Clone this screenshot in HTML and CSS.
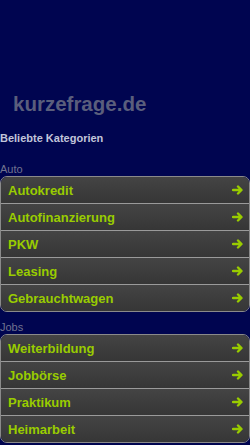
FILE: index.html
```html
<!DOCTYPE html>
<html>
<head>
    <title>kurzefrage.de</title>
    <link rel="stylesheet" href="styles.css">
</head>
<body>
    <div class="header">
        <h1 class="logo">kurzefrage.de</h1>
    </div>

    <h2 class="section-title">Beliebte Kategorien</h2>

    <!-- Auto -->
    <p class="group-label">Auto</p>
    <ul class="link-list">
        <li><a href="#">Autokredit<svg class="arrow" viewBox="0 0 12 10"><path d="M1 5h8M6 1.5L9.5 5 6 8.5"/></svg></a></li>
        <li><a href="#">Autofinanzierung<svg class="arrow" viewBox="0 0 12 10"><path d="M1 5h8M6 1.5L9.5 5 6 8.5"/></svg></a></li>
        <li><a href="#">PKW<svg class="arrow" viewBox="0 0 12 10"><path d="M1 5h8M6 1.5L9.5 5 6 8.5"/></svg></a></li>
        <li><a href="#">Leasing<svg class="arrow" viewBox="0 0 12 10"><path d="M1 5h8M6 1.5L9.5 5 6 8.5"/></svg></a></li>
        <li><a href="#">Gebrauchtwagen<svg class="arrow" viewBox="0 0 12 10"><path d="M1 5h8M6 1.5L9.5 5 6 8.5"/></svg></a></li>
    </ul>

    <!-- Jobs -->
    <p class="group-label">Jobs</p>
    <ul class="link-list">
        <li><a href="#">Weiterbildung<svg class="arrow" viewBox="0 0 12 10"><path d="M1 5h8M6 1.5L9.5 5 6 8.5"/></svg></a></li>
        <li><a href="#">Jobbörse<svg class="arrow" viewBox="0 0 12 10"><path d="M1 5h8M6 1.5L9.5 5 6 8.5"/></svg></a></li>
        <li><a href="#">Praktikum<svg class="arrow" viewBox="0 0 12 10"><path d="M1 5h8M6 1.5L9.5 5 6 8.5"/></svg></a></li>
        <li><a href="#">Heimarbeit<svg class="arrow" viewBox="0 0 12 10"><path d="M1 5h8M6 1.5L9.5 5 6 8.5"/></svg></a></li>
    </ul>
</body>
</html>
```
FILE: styles.css
```css
body {
    margin: 0;
    background-color: #000550;
    font-family: "Liberation Sans", Arial, sans-serif;
}

.header {
    padding: 92px 0 0 13px;
}

.logo {
    margin: 0;
    font-size: 20.5px;
    line-height: 24px;
    color: #5a5e7c;
}

.section-title {
    margin: 16px 0 18px 0;
    font-size: 11px;
    line-height: 13px;
    color: #c2c5da;
}

.group-label {
    margin: 9px 0 0 0;
    font-size: 11px;
    line-height: 13px;
    color: #70738f;
}

.link-list {
    list-style: none;
    margin: 0;
    padding: 0;
    border: 1px solid #8a8a8a;
    border-radius: 7px;
    overflow: hidden;
}

.link-list li {
    border-top: 1px solid #9a9a9a;
}

.link-list li:first-child {
    border-top: none;
}

.link-list a {
    display: flex;
    align-items: center;
    justify-content: space-between;
    height: 26px;
    padding: 0 5px 0 7px;
    background: linear-gradient(to bottom, #444444, #363636);
    color: #99cc00;
    font-size: 13px;
    font-weight: bold;
    text-decoration: none;
}

.arrow {
    width: 12px;
    height: 10px;
    fill: none;
    stroke: #99cc00;
    stroke-width: 2.4;
    stroke-linecap: round;
    stroke-linejoin: round;
}
```
